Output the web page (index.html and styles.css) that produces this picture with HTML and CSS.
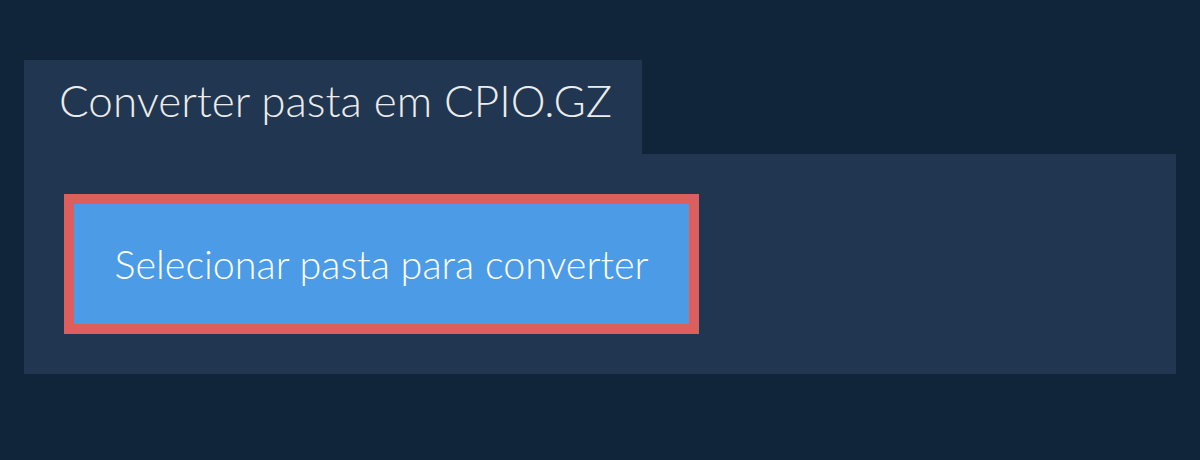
FILE: index.html
```html
<!DOCTYPE html>
<html lang="pt">
<head>
<meta charset="utf-8">
<link rel="stylesheet" href="styles.css">
</head>
<body>
<div class="wrap">
  <div class="tab"><h1 class="title">Converter pasta em CPIO.GZ</h1></div>
  <div class="panel">
    <button class="select">Selecionar pasta para converter</button>
  </div>
</div>
</body>
</html>
```
FILE: styles.css
```css
html, body {
  margin: 0;
  padding: 0;
  background: #10243a;
  font-family: Lato, "Open Sans", sans-serif;
}
.wrap {
  padding: 60px 24px 0 24px;
  display: flex;
  flex-direction: column;
  align-items: flex-start;
}
.tab {
  background: #213650;
  width: 618px;
  height: 94px;
  box-sizing: border-box;
  padding: 18px 0 0 35px;
}
.title {
  margin: 0;
  font-weight: 300;
  font-size: 44px;
  color: #ececec;
  line-height: 1;
}
.panel {
  background: #213650;
  width: 1152px;
  height: 220px;
  box-sizing: border-box;
  padding: 40px;
}
.select {
  width: 635px;
  height: 140px;
  box-sizing: border-box;
  border: 10px solid #dc5f5d;
  background: #4c9be6;
  color: #ffffff;
  font-family: Lato, "Open Sans", sans-serif;
  font-weight: 300;
  font-size: 39.5px;
  padding: 0 0 2px 0;
  margin: 0;
}
```
